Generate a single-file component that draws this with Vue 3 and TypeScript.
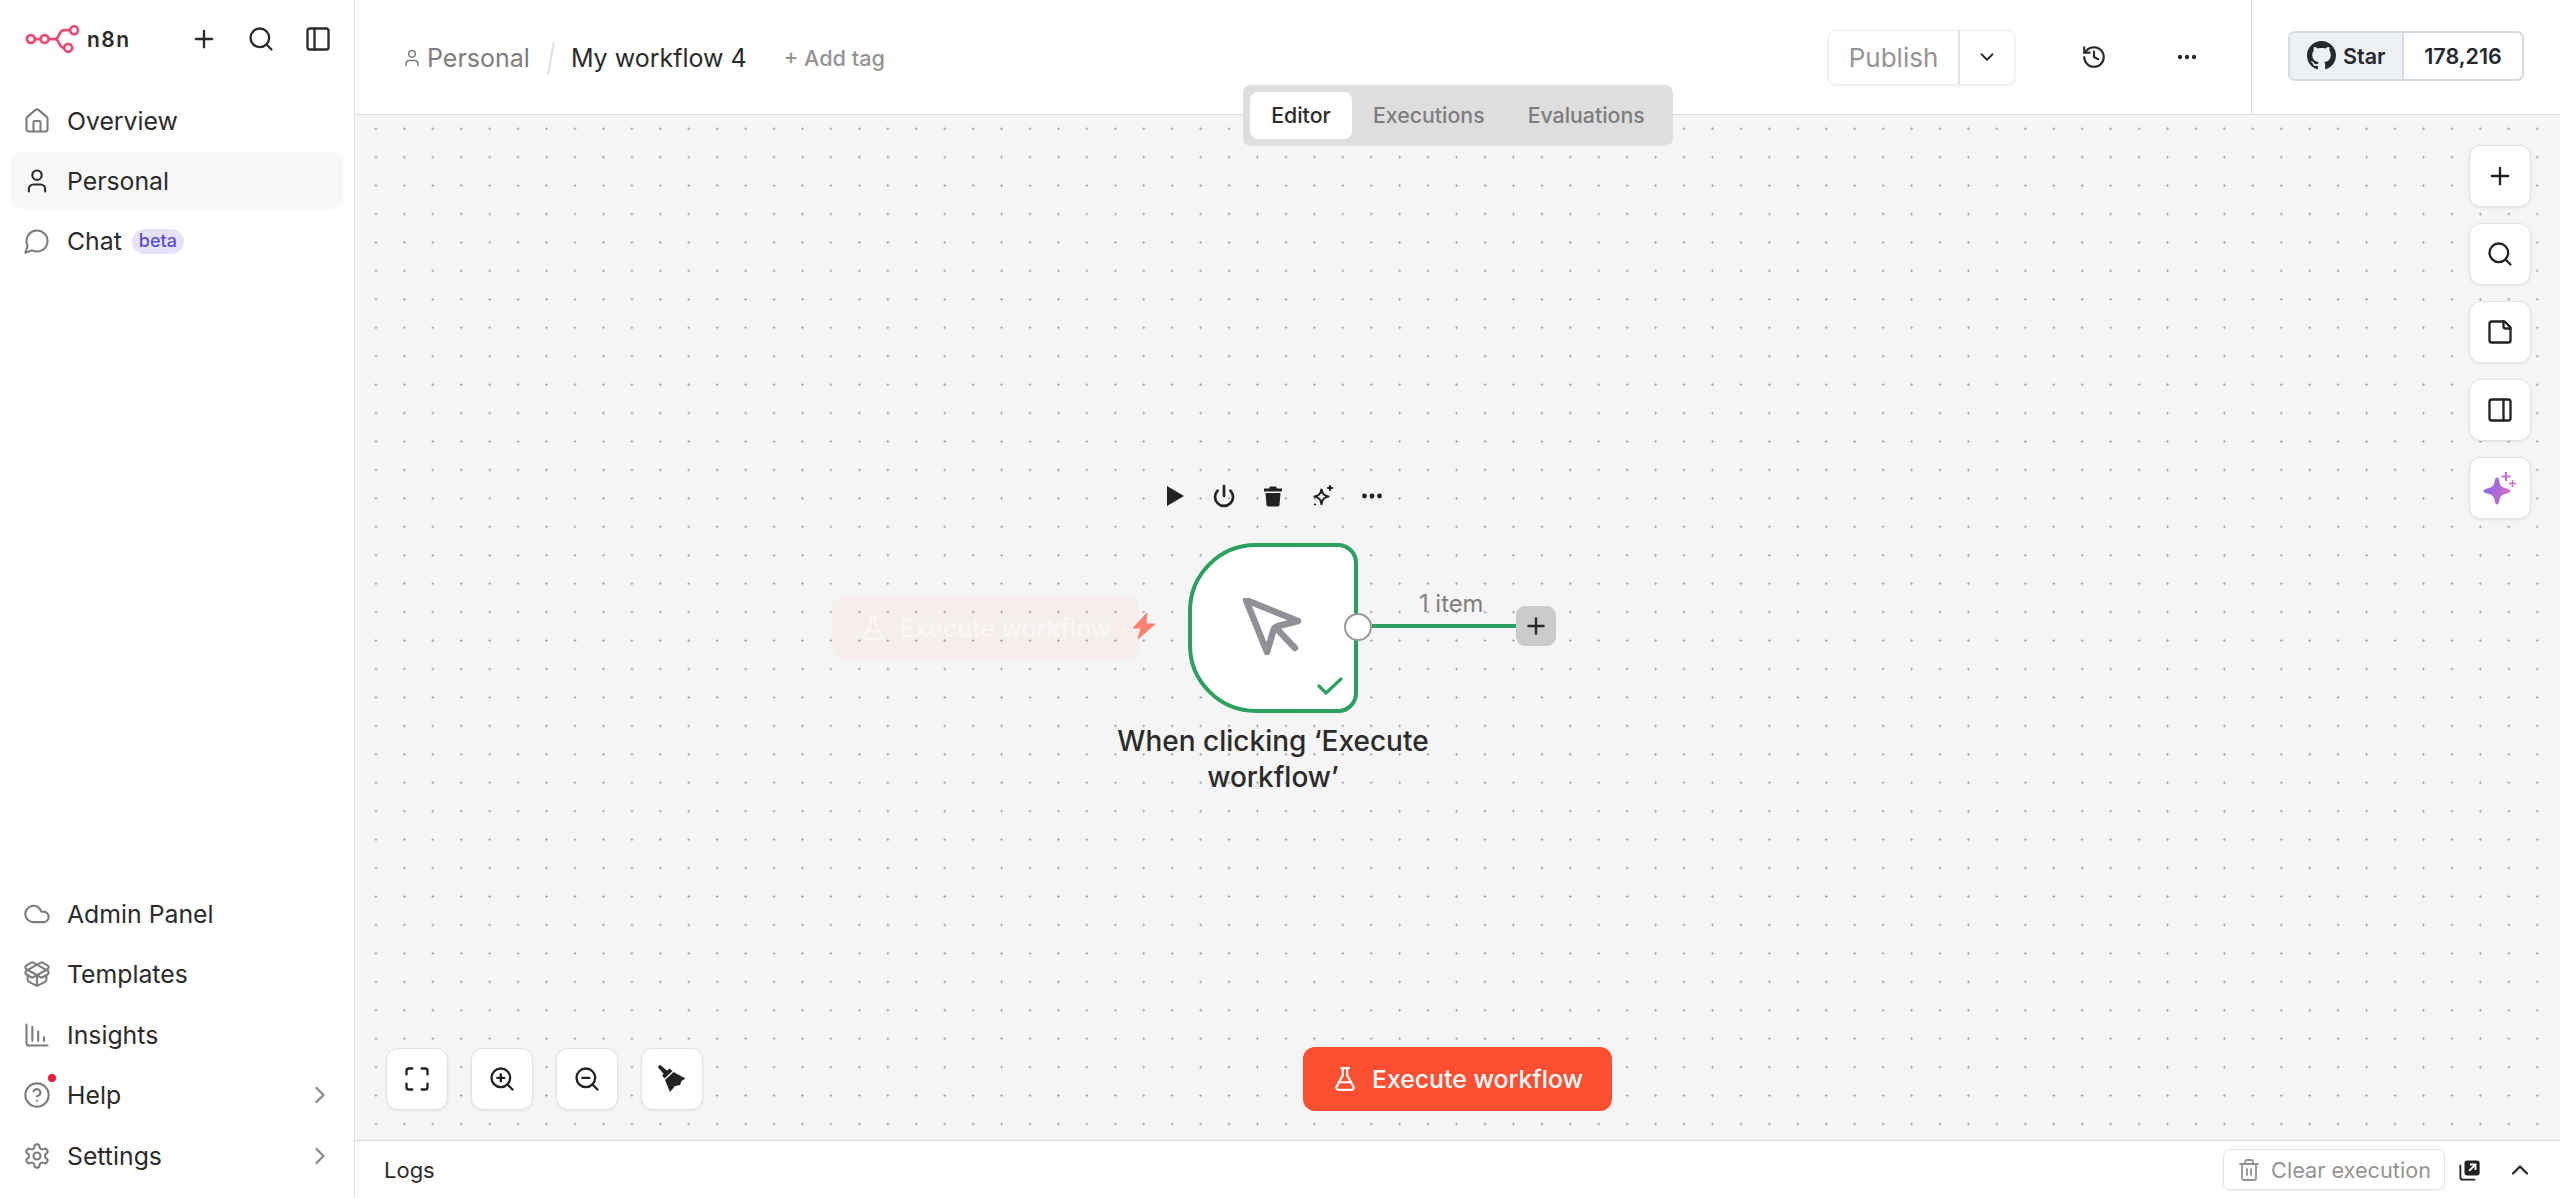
<script setup lang="ts">
const icons: Record<string, string[]> = {
  plus: ['M5 12h14', 'M12 5v14'],
  search: ['M19 11a8 8 0 1 1-16 0 8 8 0 0 1 16 0', 'm21 21-4.3-4.3'],
  panelLeft: ['M5 3h14a2 2 0 0 1 2 2v14a2 2 0 0 1-2 2H5a2 2 0 0 1-2-2V5a2 2 0 0 1 2-2', 'M9 3v18'],
  panelRight: ['M5 3h14a2 2 0 0 1 2 2v14a2 2 0 0 1-2 2H5a2 2 0 0 1-2-2V5a2 2 0 0 1 2-2', 'M15 3v18'],
  home: [
    'M15 21v-8a1 1 0 0 0-1-1h-4a1 1 0 0 0-1 1v8',
    'M3 10a2 2 0 0 1 .709-1.528l7-5.999a2 2 0 0 1 2.582 0l7 5.999A2 2 0 0 1 21 10v9a2 2 0 0 1-2 2H5a2 2 0 0 1-2-2z',
  ],
  user: ['M19 21v-2a4 4 0 0 0-4-4H9a4 4 0 0 0-4 4v2', 'M16 7a4 4 0 1 1-8 0 4 4 0 0 1 8 0'],
  chat: ['M7.9 20A9 9 0 1 0 4 16.1L2 22Z'],
  cloud: ['M17.5 19H9a7 7 0 1 1 6.71-9h1.79a4.5 4.5 0 1 1 0 9Z'],
  box: [
    'M12 22v-9',
    'M15.17 2.21a1.67 1.67 0 0 1 1.63 0L21 4.57a1.93 1.93 0 0 1 0 3.36L8.82 14.79a1.655 1.655 0 0 1-1.64 0L3 12.43a1.93 1.93 0 0 1 0-3.36z',
    'M20 13v3.87a2.06 2.06 0 0 1-1.11 1.83l-6 3.08a1.93 1.93 0 0 1-1.78 0l-6-3.08A2.06 2.06 0 0 1 4 16.87V13',
    'M21 12.43a1.93 1.93 0 0 0 0-3.36L8.83 2.2a1.64 1.64 0 0 0-1.63 0L3 4.57a1.93 1.93 0 0 0 0 3.36l12.18 6.86a1.636 1.636 0 0 0 1.63 0z',
  ],
  chart: ['M13 17V9', 'M18 17v-3', 'M3 3v16a2 2 0 0 0 2 2h16', 'M8 17V5'],
  help: ['M22 12a10 10 0 1 1-20 0 10 10 0 0 1 20 0', 'M9.09 9a3 3 0 0 1 5.83 1c0 2-3 3-3 3', 'M12 17h.01'],
  gear: [
    'M12.22 2h-.44a2 2 0 0 0-2 2v.18a2 2 0 0 1-1 1.73l-.43.25a2 2 0 0 1-2 0l-.15-.08a2 2 0 0 0-2.73.73l-.22.38a2 2 0 0 0 .73 2.73l.15.1a2 2 0 0 1 1 1.72v.51a2 2 0 0 1-1 1.74l-.15.09a2 2 0 0 0-.73 2.73l.22.38a2 2 0 0 0 2.73.73l.15-.08a2 2 0 0 1 2 0l.43.25a2 2 0 0 1 1 1.73V20a2 2 0 0 0 2 2h.44a2 2 0 0 0 2-2v-.18a2 2 0 0 1 1-1.73l.43-.25a2 2 0 0 1 2 0l.15.08a2 2 0 0 0 2.73-.73l.22-.39a2 2 0 0 0-.73-2.73l-.15-.08a2 2 0 0 1-1-1.74v-.5a2 2 0 0 1 1-1.74l.15-.09a2 2 0 0 0 .73-2.73l-.22-.38a2 2 0 0 0-2.73-.73l-.15.08a2 2 0 0 1-2 0l-.43-.25a2 2 0 0 1-1-1.73V4a2 2 0 0 0-2-2z',
    'M15 12a3 3 0 1 1-6 0 3 3 0 0 1 6 0',
  ],
  right: ['m9 18 6-6-6-6'],
  down: ['m6 9 6 6 6-6'],
  up: ['m18 15-6-6-6 6'],
  history: ['M3 12a9 9 0 1 0 9-9 9.75 9.75 0 0 0-6.74 2.74L3 8', 'M3 3v5h5', 'M12 7v5l4 2'],
  note: ['M16 3H5a2 2 0 0 0-2 2v14a2 2 0 0 0 2 2h14a2 2 0 0 0 2-2V8Z', 'M15 3v4a2 2 0 0 0 2 2h4'],
  flask: [
    'M14 2v6a2 2 0 0 0 .245.96l5.51 10.08A2 2 0 0 1 18 22H6a2 2 0 0 1-1.755-2.96l5.51-10.08A2 2 0 0 0 10 8V2',
    'M6.453 15h11.094',
    'M8.5 2h7',
  ],
  fit: ['M8 3H5a2 2 0 0 0-2 2v3', 'M21 8V5a2 2 0 0 0-2-2h-3', 'M3 16v3a2 2 0 0 0 2 2h3', 'M16 21h3a2 2 0 0 0 2-2v-3'],
  zoomIn: ['M19 11a8 8 0 1 1-16 0 8 8 0 0 1 16 0', 'm21 21-4.3-4.3', 'M11 8v6', 'M8 11h6'],
  zoomOut: ['M19 11a8 8 0 1 1-16 0 8 8 0 0 1 16 0', 'm21 21-4.3-4.3', 'M8 11h6'],
  trash: ['M3 6h18', 'M19 6v14c0 1-1 2-2 2H7c-1 0-2-1-2-2V6', 'M8 6V4c0-1 1-2 2-2h4c1 0 2 1 2 2v2', 'M10 11v6', 'M14 11v6'],
  power: ['M12 2v10', 'M18.4 6.6a9 9 0 1 1-12.77.04'],
  sparkles: [
    'M10.5 5.5c.7 4.2 2.3 6 7 7-4.700 1-6.300 2.800-7 7.500-.7-4.700-2.300-6.500-7-7.500 4.700-1 6.300-2.800 7-7z',
    'M19 2v4',
    'M17 4h4',
    'M4 20.500h.01',
  ],
}

const topNav = [
  { label: 'Overview', icon: 'home' },
  { label: 'Personal', icon: 'user', active: true, dark: true },
  { label: 'Chat', icon: 'chat', badge: 'beta' },
]

const bottomNav = [
  { label: 'Admin Panel', icon: 'cloud' },
  { label: 'Templates', icon: 'box' },
  { label: 'Insights', icon: 'chart' },
  { label: 'Help', icon: 'help', more: true, dot: true },
  { label: 'Settings', icon: 'gear', more: true },
]

const tabs = ['Editor', 'Executions', 'Evaluations']
const sideTools = ['plus', 'search', 'note', 'panelRight']
const zoomTools = ['fit', 'zoomIn', 'zoomOut']
</script>

<template>
  <div class="app">
    <aside class="sidebar">
      <div class="brand">
        <svg class="logo" viewBox="0 0 56 30" fill="none" stroke="#ea4b71" stroke-width="2.8">
          <circle cx="6" cy="15" r="4" />
          <circle cx="20" cy="15" r="4" />
          <circle cx="50" cy="6" r="4" />
          <circle cx="44" cy="24" r="4" />
          <path d="M10 15h6M24 15h7c4 0 3-9 9-9h6M31 15c4 0 3 9 9 9" />
        </svg>
        <span class="brand-name">n8n</span>
        <div class="brand-tools">
          <svg v-for="name in ['plus', 'search', 'panelLeft']" :key="name" class="ic ic-brand" viewBox="0 0 24 24">
            <path v-for="d in icons[name]" :key="d" :d="d" />
          </svg>
        </div>
      </div>

      <nav class="nav">
        <a v-for="item in topNav" :key="item.label" class="nav-item" :class="{ active: item.active }">
          <svg class="ic ic-nav" :class="{ dark: item.dark }" viewBox="0 0 24 24">
            <path v-for="d in icons[item.icon]" :key="d" :d="d" />
          </svg>
          <span>{{ item.label }}</span>
          <span v-if="item.badge" class="badge">{{ item.badge }}</span>
        </a>
      </nav>

      <nav class="nav nav-bottom">
        <a v-for="item in bottomNav" :key="item.label" class="nav-item">
          <span class="nav-icon">
            <svg class="ic ic-nav" viewBox="0 0 24 24">
              <path v-for="d in icons[item.icon]" :key="d" :d="d" />
            </svg>
            <i v-if="item.dot" class="red-dot"></i>
          </span>
          <span>{{ item.label }}</span>
          <svg v-if="item.more" class="ic ic-more" viewBox="0 0 24 24">
            <path v-for="d in icons.right" :key="d" :d="d" />
          </svg>
        </a>
      </nav>
    </aside>

    <main class="main">
      <header class="topbar">
        <div class="crumbs">
          <svg class="ic ic-crumb" viewBox="0 0 24 24">
            <path v-for="d in icons.user" :key="d" :d="d" />
          </svg>
          <span class="crumb-project">Personal</span>
          <span class="crumb-slash"></span>
          <span class="crumb-name">My workflow 4</span>
          <span class="add-tag">+ Add tag</span>
        </div>

        <div class="actions">
          <div class="publish">
            <span class="publish-label">Publish</span>
            <span class="publish-more">
              <svg class="ic ic-small" viewBox="0 0 24 24">
                <path v-for="d in icons.down" :key="d" :d="d" />
              </svg>
            </span>
          </div>
          <svg class="ic ic-history" viewBox="0 0 24 24">
            <path v-for="d in icons.history" :key="d" :d="d" />
          </svg>
          <svg class="dots-h" viewBox="0 0 24 24" fill="currentColor">
            <circle cx="5" cy="12" r="2.2" />
            <circle cx="12" cy="12" r="2.2" />
            <circle cx="19" cy="12" r="2.2" />
          </svg>
        </div>

        <div class="github">
          <div class="gh-button">
            <span class="gh-star">
              <svg class="gh-mark" viewBox="0 0 16 16" fill="currentColor">
                <path d="M8 0C3.58 0 0 3.58 0 8c0 3.54 2.29 6.53 5.47 7.59.4.07.55-.17.55-.38 0-.19-.01-.82-.01-1.49-2.01.37-2.53-.49-2.69-.94-.09-.23-.48-.94-.82-1.13-.28-.15-.68-.52-.01-.53.63-.01 1.08.58 1.23.82.72 1.21 1.87.87 2.33.66.07-.52.28-.87.51-1.07-1.78-.2-3.64-.89-3.64-3.95 0-.87.31-1.59.82-2.15-.08-.2-.36-1.02.08-2.12 0 0 .67-.21 2.2.82.64-.18 1.32-.27 2-.27.68 0 1.36.09 2 .27 1.53-1.04 2.2-.82 2.2-.82.44 1.1.16 1.92.08 2.12.51.56.82 1.27.82 2.15 0 3.07-1.87 3.75-3.65 3.95.29.25.54.73.54 1.48 0 1.07-.01 1.93-.01 2.2 0 .21.15.46.55.38A8.013 8.013 0 0 0 16 8c0-4.42-3.58-8-8-8z" />
              </svg>
              Star
            </span>
            <span class="gh-count">178,216</span>
          </div>
        </div>

        <div class="tabs">
          <span v-for="(tab, i) in tabs" :key="tab" class="tab" :class="{ current: i === 0 }">{{ tab }}</span>
        </div>
      </header>

      <section class="canvas">
        <!-- node group sits on the free canvas -->
        <div class="ghost-run">
          <svg class="ic ic-flask" viewBox="0 0 24 24">
            <path v-for="d in icons.flask" :key="d" :d="d" />
          </svg>
          Execute workflow
        </div>
        <svg class="bolt" viewBox="0 0 24 26" fill="#ff8172">
          <path d="M15 0 1 15h8l-3 11 17-15h-9z" stroke="#ff8172" stroke-width="1" stroke-linejoin="round" />
        </svg>

        <div class="node-tools">
          <svg class="tool-svg" viewBox="0 0 24 24" fill="currentColor"><path d="M5 2v20l17-10z" /></svg>
          <svg class="ic tool-svg tool-power" viewBox="0 0 24 24">
            <path v-for="d in icons.power" :key="d" :d="d" />
          </svg>
          <svg class="tool-svg" viewBox="0 0 24 24" fill="currentColor">
            <path d="M9 2.500h6l1 2h5v3H3v-3h5zM4.500 9h15l-1 12a2 2 0 0 1-2 1.500h-9a2 2 0 0 1-2-1.500z" />
          </svg>
          <svg class="ic tool-svg tool-spark" viewBox="0 0 24 24">
            <path v-for="d in icons.sparkles" :key="d" :d="d" />
          </svg>
          <svg class="tool-svg" viewBox="0 0 24 24" fill="currentColor">
            <circle cx="4.500" cy="12" r="2.400" />
            <circle cx="12" cy="12" r="2.400" />
            <circle cx="19.500" cy="12" r="2.400" />
          </svg>
        </div>

        <div class="node">
          <svg class="pointer" viewBox="0 0 60 60" fill="none" stroke="#909098" stroke-width="6.500" stroke-linecap="round" stroke-linejoin="round">
            <path d="M3 2 55 23 35 28Q31.500 29 30.500 32L24 54Z" />
            <path d="M33 30 52 50" />
          </svg>
          <svg class="node-check" viewBox="0 0 26 18" fill="none" stroke="#2ba05f" stroke-width="3.200" stroke-linecap="round" stroke-linejoin="round">
            <path d="M2 9l7 7L24 2" />
          </svg>
        </div>
        <span class="port"></span>
        <span class="edge"></span>
        <span class="edge-label">1 item</span>
        <span class="edge-add">
          <svg class="ic ic-add" viewBox="0 0 24 24">
            <path v-for="d in icons.plus" :key="d" :d="d" />
          </svg>
        </span>
        <div class="node-label">When clicking ‘Execute workflow’</div>

        <div class="side-tools">
          <button v-for="name in sideTools" :key="name" class="tool">
            <svg class="ic ic-tool" viewBox="0 0 24 24">
              <path v-for="d in icons[name]" :key="d" :d="d" />
            </svg>
          </button>
          <button class="tool">
            <svg class="ic-spark" viewBox="0 0 36 36">
              <defs>
                <linearGradient id="spark" x1="0" y1="0" x2="1" y2="0.300">
                  <stop offset="0" stop-color="#7b68ee" />
                  <stop offset="1" stop-color="#d36ac2" />
                </linearGradient>
              </defs>
              <path fill="url(#spark)" d="M15 7.500c1.500 0 2 2 2.500 4.500.6 3.500 2 5 5.500 6 2 .5 5.500 1.500 5.500 3s-3.500 2.500-5.500 3c-3.500 1-5 2.500-5.500 6-.5 2.500-1 4.500-2.500 4.500s-2-2-2.500-4.500c-.6-3.500-2-5-5.500-6-2-.5-5.500-1.500-5.500-3s3.500-2.500 5.500-3c3.500-1 5-2.500 5.500-6 .5-2.500 1-4.500 2.500-4.500z" />
              <path fill="#c86fd8" d="M23 2h2v3.500h3.500v2H25V11h-2V7.500h-3.500v-2H23z" />
              <path fill="#d573bd" d="M29.700 10h1.600v2.700H34v1.600h-2.700V17h-1.600v-2.700H27v-1.600h2.700z" />
            </svg>
          </button>
        </div>

        <div class="zoom-tools">
          <button v-for="name in zoomTools" :key="name" class="tool">
            <svg class="ic ic-tool" viewBox="0 0 24 24">
              <path v-for="d in icons[name]" :key="d" :d="d" />
            </svg>
          </button>
          <button class="tool">
            <svg class="ic-broom" viewBox="0 0 30 30" fill="currentColor">
              <path d="M.8 2.900 3 .7 11 7.500 7.500 11z" />
              <path d="M5 11.500 12.500 4.500 15.500 7 7.500 14.500z" />
              <path d="M8 16 16.500 8 28.500 14.500 24.500 17 23 21 18 22 13 28z" />
            </svg>
          </button>
        </div>

        <button class="run">
          <svg class="ic ic-flask" viewBox="0 0 24 24">
            <path v-for="d in icons.flask" :key="d" :d="d" />
          </svg>
          Execute workflow
        </button>
      </section>

      <footer class="logs">
        <span class="logs-title">Logs</span>
        <button class="clear">
          <svg class="ic ic-clear" viewBox="0 0 24 24">
            <path v-for="d in icons.trash" :key="d" :d="d" />
          </svg>
          Clear execution
        </button>
        <svg class="popout" viewBox="0 0 24 24">
          <rect x="6" y="1.500" width="16.500" height="16.500" rx="3" fill="#222" />
          <path d="M1.500 7v12.500a3 3 0 0 0 3 3H17" fill="none" stroke="#222" stroke-width="2" stroke-linecap="round" />
          <path d="M11 13l7-7M12 6h6v6" fill="none" stroke="#fff" stroke-width="2" />
        </svg>
        <svg class="ic ic-up" viewBox="0 0 24 24">
          <path v-for="d in icons.up" :key="d" :d="d" />
        </svg>
      </footer>
    </main>
  </div>
</template>

<style scoped>
  .app {
    display: flex;
    height: 100vh;
    overflow: hidden;
    background: #fff;
    color: #2b2b2b;
    font-family: Inter, 'Liberation Sans', sans-serif;
  }

  .ic {
    fill: none;
    stroke: currentColor;
    stroke-width: 2;
    stroke-linecap: round;
    stroke-linejoin: round;
    flex: none;
  }

  /* sidebar */
  .sidebar {
    display: flex;
    flex-direction: column;
    flex: none;
    box-sizing: border-box;
    width: 355px;
    padding: 0 11px 14px;
    border-right: 1px solid #e2e2e2;
  }

  .brand {
    display: flex;
    align-items: center;
    height: 78px;
    padding-left: 14px;
    margin-bottom: 14px;
  }

  .logo {
    width: 55px;
    height: 30px;
    flex: none;
  }

  .brand-name {
    margin-left: 7px;
    font-size: 21px;
    font-weight: 600;
    letter-spacing: 1.5px;
  }

  .brand-tools {
    display: flex;
    gap: 29px;
    margin-left: auto;
    margin-right: 11px;
  }

  .ic-brand {
    width: 28px;
    height: 28px;
    stroke-width: 2;
  }

  .nav {
    display: flex;
    flex-direction: column;
    gap: 3.4px;
  }

  .nav-bottom {
    margin-top: auto;
  }

  .nav-item {
    display: flex;
    align-items: center;
    gap: 16px;
    height: 57px;
    padding: 0 12px;
    border-radius: 10px;
    font-size: 24.8px;
  }

  .nav-item.active {
    background: #f8f8f8;
  }

  .nav-icon {
    position: relative;
    display: flex;
  }

  .ic-nav {
    width: 28px;
    height: 28px;
    color: #7d7d7d;
    stroke-width: 1.8;
  }

  .ic-nav.dark {
    color: #2b2b2b;
  }

  .red-dot {
    position: absolute;
    top: -7px;
    right: -5px;
    width: 8px;
    height: 8px;
    border-radius: 50%;
    background: #f0183a;
  }

  .badge {
    margin-left: -6px;
    padding: 0 7px;
    height: 25px;
    line-height: 24px;
    border-radius: 13px;
    background: #e6e3f9;
    color: #5a4fcf;
    font-size: 18px;
    font-weight: 500;
  }

  .ic-more {
    width: 28px;
    height: 28px;
    margin-left: auto;
    margin-right: -3px;
    color: #8a8a8a;
  }

  /* top bar */
  .main {
    display: flex;
    flex-direction: column;
    flex: 1;
    min-width: 0;
  }

  .topbar {
    position: relative;
    display: flex;
    align-items: center;
    flex: none;
    box-sizing: border-box;
    height: 115px;
    padding-left: 47px;
    border-bottom: 1px solid #dcdcdc;
  }

  .crumbs {
    display: flex;
    align-items: center;
    margin-top: 2px;
    font-size: 25px;
  }

  .ic-crumb {
    width: 20px;
    height: 20px;
    color: #7d7d7d;
    stroke-width: 1.8;
  }

  .crumb-project {
    margin-left: 5px;
    color: #7d7d7d;
  }

  .crumb-slash {
    width: 2px;
    height: 33px;
    margin: 0 19px 0 20px;
    background: #e0e0e0;
    transform: rotate(10deg);
  }

  .crumb-name {
    color: #2b2b2b;
  }

  .add-tag {
    margin-left: 37px;
    color: #949494;
    font-size: 21.7px;
    font-weight: 500;
  }

  .actions {
    display: flex;
    align-items: center;
    margin-left: auto;
  }

  .publish {
    display: flex;
    height: 55px;
    box-sizing: border-box;
    border: 1px solid #ececec;
    border-radius: 8px;
    box-shadow: 0 1px 3px rgba(0, 0, 0, 0.08);
  }

  .publish-label {
    display: flex;
    align-items: center;
    justify-content: center;
    width: 129px;
    color: #949494;
    font-size: 26px;
  }

  .publish-more {
    display: flex;
    align-items: center;
    justify-content: center;
    width: 54px;
    border-left: 2px solid #e2e2e2;
    color: #2b2b2b;
  }

  .ic-small {
    width: 22px;
    height: 22px;
  }

  .ic-history {
    width: 26px;
    height: 26px;
    margin-left: 66px;
  }

  .dots-h {
    width: 24px;
    height: 24px;
    margin: 0 52px 0 68px;
  }

  .github {
    display: flex;
    align-items: center;
    justify-content: center;
    align-self: stretch;
    flex: none;
    width: 309px;
    margin-bottom: -1px;
    box-sizing: border-box;
    border-left: 1px solid #dcdcdc;
  }

  .gh-button {
    display: flex;
    height: 50px;
    box-sizing: border-box;
    margin-bottom: 4px;
    border: 2px solid #d5dae0;
    border-radius: 7px;
    overflow: hidden;
    color: #24292f;
    font-size: 21.5px;
    font-weight: 600;
  }

  .gh-star {
    display: flex;
    align-items: center;
    gap: 7px;
    width: 114px;
    box-sizing: border-box;
    padding-left: 17px;
    background: #eef1f4;
    border-right: 2px solid #d5dae0;
  }

  .gh-mark {
    width: 29px;
    height: 29px;
  }

  .gh-count {
    display: flex;
    align-items: center;
    justify-content: center;
    width: 118px;
  }

  .tabs {
    position: absolute;
    top: 85px;
    left: 888px;
    z-index: 2;
    display: flex;
    gap: 19px;
    box-sizing: border-box;
    width: 430px;
    height: 61px;
    padding: 7px;
    border-radius: 8px;
    background: #dedede;
  }

  .tab {
    display: flex;
    align-items: center;
    justify-content: center;
    padding: 0 12px 1px;
    color: #7d7d7d;
    font-size: 21.3px;
    font-weight: 500;
  }

  .tab.current {
    width: 102px;
    box-sizing: border-box;
    margin-right: -10px;
    background: #fff;
    border-radius: 8px;
    color: #2b2b2b;
  }

  /* canvas */
  .canvas {
    position: relative;
    flex: 1;
    min-height: 0;
    background-color: #f5f5f5;
    background-image: radial-gradient(circle at center, #a0a0a0 0.9px, transparent 1.3px);
    background-size: 28.44px 28.44px;
    background-position: 6.74px -0.52px;
  }

  .ghost-run {
    position: absolute;
    left: 477px;
    top: 481px;
    display: flex;
    align-items: center;
    gap: 14px;
    box-sizing: border-box;
    width: 307px;
    height: 63px;
    padding-left: 28px;
    border-radius: 12px;
    background: rgba(255, 79, 51, 0.04);
    color: rgba(255, 255, 255, 0.5);
    font-size: 24.8px;
    font-weight: 500;
  }

  .ic-flask {
    width: 26px;
    height: 26px;
  }

  .bolt {
    position: absolute;
    left: 777px;
    top: 498px;
    width: 24px;
    height: 26px;
  }

  .node-tools {
    position: absolute;
    left: 807px;
    top: 369px;
    display: flex;
    gap: 25.5px;
    color: #222;
  }

  .tool-svg {
    width: 24px;
    height: 24px;
  }

  .tool-power {
    stroke-width: 2.7;
  }

  .tool-spark {
    stroke-width: 2.2;
  }

  .node {
    position: absolute;
    left: 833px;
    top: 428px;
    box-sizing: border-box;
    width: 170px;
    height: 170px;
    background: #fff;
    border: 4px solid #2ba05f;
    border-radius: 68px 20px 20px 68px;
  }

  .pointer {
    position: absolute;
    left: 51px;
    top: 51px;
    width: 60px;
    height: 60px;
  }

  .node-check {
    position: absolute;
    left: 125px;
    top: 130px;
    width: 26px;
    height: 18px;
  }

  .port {
    position: absolute;
    left: 989px;
    top: 498px;
    box-sizing: border-box;
    width: 28px;
    height: 28px;
    background: #fff;
    border: 2.5px solid #9a9a9a;
    border-radius: 50%;
  }

  .edge {
    position: absolute;
    left: 1017px;
    top: 509px;
    width: 145px;
    height: 4px;
    background: #2ba05f;
  }

  .edge-label {
    position: absolute;
    left: 1064px;
    top: 474px;
    color: #808080;
    font-size: 23.8px;
  }

  .edge-add {
    position: absolute;
    left: 1161px;
    top: 491px;
    display: flex;
    align-items: center;
    justify-content: center;
    width: 40px;
    height: 40px;
    border-radius: 9px;
    background: #cbcbcb;
  }

  .ic-add {
    width: 26px;
    height: 26px;
    stroke-width: 2.2;
  }

  .node-label {
    position: absolute;
    left: 748px;
    top: 608px;
    width: 340px;
    text-align: center;
    font-size: 28px;
    line-height: 36px;
    font-weight: 500;
  }

  .tool {
    display: flex;
    align-items: center;
    justify-content: center;
    box-sizing: border-box;
    width: 62px;
    height: 62px;
    padding: 0;
    border: 1px solid #e2e2e2;
    border-radius: 12px;
    background: #fff;
    box-shadow: 0 1px 3px rgba(0, 0, 0, 0.07);
    color: #222;
  }

  .ic-tool {
    width: 28px;
    height: 28px;
  }

  .ic-spark {
    width: 36px;
    height: 36px;
  }

  .ic-broom {
    width: 30px;
    height: 30px;
  }

  .side-tools {
    position: absolute;
    right: 29.5px;
    top: 29.5px;
    display: flex;
    flex-direction: column;
    gap: 16px;
  }

  .zoom-tools {
    position: absolute;
    left: 30.5px;
    bottom: 30.5px;
    display: flex;
    gap: 23px;
  }

  .run {
    position: absolute;
    left: 948px;
    bottom: 29px;
    display: flex;
    align-items: center;
    gap: 14px;
    box-sizing: border-box;
    width: 309px;
    height: 64px;
    padding: 0 0 0 29px;
    border: 0;
    border-radius: 12px;
    background: #ff4f33;
    color: #fff;
    font-family: inherit;
    font-size: 24.8px;
    font-weight: 500;
  }

  /* logs */
  .logs {
    display: flex;
    align-items: center;
    flex: none;
    box-sizing: border-box;
    height: 58px;
    padding: 0 26px 0 29px;
    border-top: 1px solid #dcdcdc;
  }

  .logs-title {
    font-size: 22px;
  }

  .clear {
    display: flex;
    align-items: center;
    gap: 10px;
    box-sizing: border-box;
    height: 41px;
    margin-left: auto;
    padding: 0 13px;
    border: 1px solid #e4e4e4;
    border-radius: 7px;
    background: #fff;
    box-shadow: 0 1px 2px rgba(0, 0, 0, 0.06);
    color: #949494;
    font-family: inherit;
    font-size: 21.7px;
  }

  .ic-clear {
    width: 24px;
    height: 24px;
    stroke-width: 1.8;
  }

  .popout {
    width: 22px;
    height: 22px;
    margin-left: 14px;
  }

  .ic-up {
    width: 28px;
    height: 28px;
    margin-left: 25px;
  }
</style>
